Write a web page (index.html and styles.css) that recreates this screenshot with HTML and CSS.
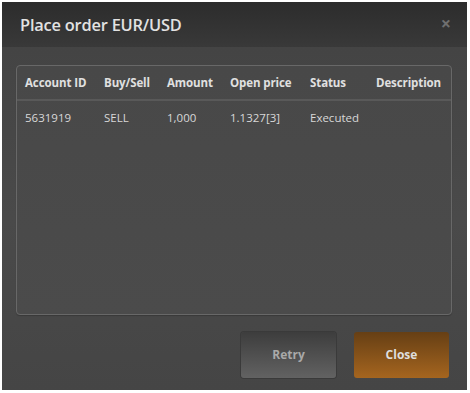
FILE: index.html
```html
<!DOCTYPE html>
<html>
<head>
<meta charset="utf-8">
<link rel="stylesheet" href="styles.css">
</head>
<body>
<div class="dialog">
  <div class="header">
    <span class="title">Place order EUR/USD</span>
    <span class="close-x">×</span>
  </div>
  <div class="content">
    <div class="panel">
      <table class="orders">
        <thead>
          <tr><th>Account ID</th><th>Buy/Sell</th><th>Amount</th><th>Open price</th><th>Status</th><th>Description</th></tr>
        </thead>
        <tbody>
          <tr><td>5631919</td><td>SELL</td><td>1,000</td><td>1.1327[3]</td><td>Executed</td><td></td></tr>
        </tbody>
      </table>
    </div>
    <div class="actions">
      <button class="btn btn-retry">Retry</button>
      <button class="btn btn-close">Close</button>
    </div>
  </div>
</div>
</body>
</html>
```
FILE: styles.css
```css
html, body { margin: 0; padding: 0; background: #fff; }
body { font-family: "Open Sans", "Noto Sans", sans-serif; }
.dialog {
  margin: 2px;
  width: 465px;
  height: 388px;
  background: #474747;
  display: flex;
  flex-direction: column;
}
.header {
  height: 45px;
  flex: none;
  background: linear-gradient(#2c2c2c, #393939);
  display: flex;
  align-items: center;
  justify-content: space-between;
  padding: 0 16px 0 18px;
}
.title {
  color: #e2e2e2;
  font-size: 16.4px;
  font-weight: 600;
  letter-spacing: -0.2px;
}
.close-x {
  color: #6f6f6f;
  font-size: 18px;
  font-weight: 700;
  margin-top: -4px;
}
.content {
  flex: 1;
  display: flex;
  flex-direction: column;
  padding: 18px 15px 12px 14px;
  background: linear-gradient(#444, #4a4a4a 50%, #454545);
}
.panel {
  height: 248px;
  flex: none;
  border: 1px solid #686868;
  border-radius: 4px;
  background: linear-gradient(#484848, #4b4b4b);
  box-shadow: 0 1px 1px rgba(0,0,0,0.2);
}
.orders {
  border-collapse: collapse;
  width: 100%;
  font-size: 11.5px;
}
.orders th {
  text-align: left;
  color: #e0e0e0;
  font-weight: 700;
  height: 33px;
  padding: 0 0 0 8px;
  border-bottom: 2px solid #595959;
  white-space: nowrap;
  letter-spacing: -0.1px;
}
.orders td {
  color: #d8d8d8;
  height: 33px;
  padding: 0 0 0 8px;
  white-space: nowrap;
}
.orders th:nth-child(1), .orders td:nth-child(1) { width: 71px; }
.orders th:nth-child(2), .orders td:nth-child(2) { width: 55px; }
.orders th:nth-child(3), .orders td:nth-child(3) { width: 55px; }
.orders th:nth-child(4), .orders td:nth-child(4) { width: 72px; }
.orders th:nth-child(5), .orders td:nth-child(5) { width: 58px; }
.actions {
  margin-top: auto;
  display: flex;
  justify-content: flex-end;
  gap: 18px;
  padding-right: 3px;
}
.btn {
  width: 95px;
  height: 46px;
  border: none;
  border-radius: 3px;
  font-family: "Open Sans", "Noto Sans", sans-serif;
  font-size: 12px;
  font-weight: 700;
  padding: 0 0 2px;
}
.btn-retry {
  background: linear-gradient(#3d3d3d, #626262);
  color: #a9a9a9;
  box-shadow: 0 0 0 1px #3a3a3a;
}
.btn-close {
  background: linear-gradient(#663f14, #a5651f);
  color: #dedede;
}
```
